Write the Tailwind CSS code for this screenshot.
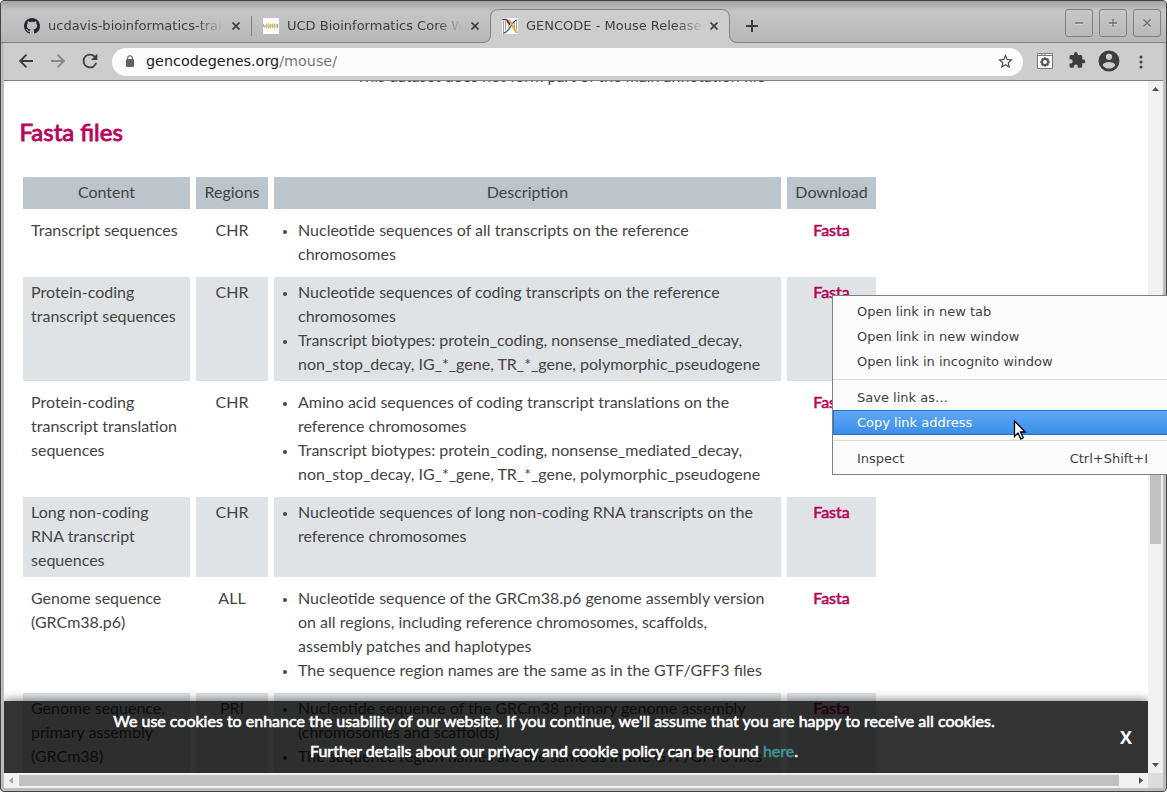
<!DOCTYPE html>
<html lang="en">
<head>
<meta charset="utf-8">
<title>GENCODE - Mouse Release</title>
<script src="https://cdn.jsdelivr.net/npm/@tailwindcss/browser@4"></script>
</head>
<body class="w-[1167px] h-[792px] overflow-hidden bg-white font-['DejaVu_Sans',sans-serif] text-[13px] text-[#3c3f41]">
<div class="relative flex flex-col w-[1167px] h-[792px] overflow-hidden rounded-[4px] border border-[#454345] bg-[#bebcbe]">
  <!-- tab strip -->
  <header class="flex h-[42px] shrink-0 items-end border-b border-[#808080] bg-linear-to-b from-[#a2a2a2] via-[#c6c6c6] via-25% to-[#b7b7b7] pl-[23px]">
    <div class="flex h-[33px] w-[227px] shrink-0 items-center">
      <svg class="size-4 shrink-0" viewBox="0 0 16 16" fill="#24292e"><path d="M8 0C3.58 0 0 3.58 0 8c0 3.54 2.29 6.53 5.47 7.59.4.07.55-.17.55-.38 0-.19-.01-.82-.01-1.49-2.01.37-2.53-.49-2.69-.94-.09-.23-.48-.94-.82-1.13-.28-.15-.68-.52-.01-.53.63-.01 1.08.58 1.23.82.72 1.21 1.87.87 2.33.66.07-.52.28-.87.51-1.07-1.78-.2-3.64-.89-3.64-3.95 0-.87.31-1.59.82-2.15-.08-.2-.36-1.02.08-2.12 0 0 .67-.21 2.2.82.64-.18 1.32-.27 2-.27s1.36.09 2 .27c1.53-1.04 2.2-.82 2.2-.82.44 1.1.16 1.92.08 2.12.51.56.82 1.27.82 2.15 0 3.07-1.87 3.75-3.65 3.95.29.25.54.73.54 1.48 0 1.07-.01 1.93-.01 2.2 0 .21.15.46.55.38A8.01 8.01 0 0 0 16 8c0-4.42-3.58-8-8-8z"/></svg>
      <span class="ml-2 w-[175px] overflow-hidden whitespace-nowrap mask-r-from-[148px] mask-r-to-[175px]">ucdavis-bioinformatics-training</span>
      <svg class="ml-[9px] size-2 shrink-0" viewBox="0 0 8 8" stroke="#3c3f41" stroke-width="1.7"><path d="M.5.5l7 7M7.5.5l-7 7"/></svg>
    </div>
    <div class="mb-[6px] h-5 w-px shrink-0 bg-[#808080]"></div>
    <div class="flex h-[33px] w-[238px] shrink-0 items-center pl-[11px]">
      <svg class="size-4 shrink-0" viewBox="0 0 16 16"><path fill="#fff" d="M0 0h16v16H0z"/><path stroke="#ecd3a0" stroke-width="3" d="M3 8h10.500"/><path stroke="#d9b263" stroke-width="5" stroke-dasharray="1 1" d="M3 8h10.500"/><path stroke="#7aa7c7" d="M.6 6v3M1.900 7v3M14.500 6v4"/></svg>
      <span class="ml-2 w-[177px] overflow-hidden whitespace-nowrap mask-r-from-[150px] mask-r-to-[175px]">UCD Bioinformatics Core Workshop</span>
      <svg class="ml-[7px] size-2 shrink-0" viewBox="0 0 8 8" stroke="#3c3f41" stroke-width="1.7"><path d="M.5.5l7 7M7.500.5l-7 7"/></svg>
    </div>
    <div class="relative -mb-px -ml-2 flex h-[34px] w-[256px] shrink-0 items-center pl-[20px]">
      <svg class="absolute inset-0 h-[34px] w-[256px]" viewBox="0 0 256 34"><path fill="#cdcdcd" d="M0 34V33.500C6 33.500 8.500 31 8.500 26V8.500Q8.500.5 16.500.5H239.500Q247.500.5 247.500 8.500V25.500Q247.500 33.500 255.500 33.500V34z"/><path fill="none" stroke="#808080" d="M0 33.500C6 33.500 8.500 31 8.500 25.500V8.500Q8.500.5 16.500.5H239.500Q247.500.5 247.500 8.500V25.500Q247.500 33.500 255.500 33.500"/></svg>
      <svg class="relative size-4 shrink-0" viewBox="0 0 16 16" fill="none"><path fill="#fff" d="M0 0h16v16H0z"/><path stroke="#888" stroke-width=".8" d="M1.500 3v11M3.500 3v9M4.500 2l3 8M12.500 4v6M14.500 3v9"/><path stroke="#7b3378" stroke-width="1.400" d="M0 1.500h4c2 0 3 3 4 5"/><path stroke="#347f48" stroke-width="1.400" d="M1 15.300c4-.3 6-4 8-7.300"/><path stroke="#333a60" stroke-width="1.200" d="M9 8c2-4 3-5.500 6-6M8 7l-3-4"/><path stroke="#eda52c" stroke-width="1.900" d="M7 2c3 2 4 10 8.500 13"/></svg>
      <span class="relative ml-2 w-[176px] overflow-hidden whitespace-nowrap mask-r-from-[150px] mask-r-to-[178px]">GENCODE - Mouse Release M25</span>
      <svg class="relative ml-2 size-2 shrink-0" viewBox="0 0 8 8" stroke="#3c3f41" stroke-width="1.700"><path d="M.5.5l7 7M7.500.5l-7 7"/></svg>
    </div>
    <svg class="mb-[10px] ml-2 size-3 shrink-0" viewBox="0 0 12 12" stroke="#3c3f41" stroke-width="2"><path d="M6 0v12M0 6h12"/></svg>
    <div class="mb-[5px] ml-auto mr-[5px] flex gap-[6px]">
      <div class="flex size-7 items-center justify-center rounded-[3px] border border-[#808080]"><svg class="size-[10px]" viewBox="0 0 10 10" fill="none" stroke-width="1.300"><path stroke="#ddd" d="M1 6h8"/><path stroke="#707070" d="M1 5h8"/></svg></div>
      <div class="flex size-7 items-center justify-center rounded-[3px] border border-[#808080]"><svg class="size-[10px]" viewBox="0 0 10 10" fill="none" stroke-width="1.300"><path stroke="#ddd" d="M1 6h8M5 2v8"/><path stroke="#707070" d="M1 5h8M5 1v8"/></svg></div>
      <div class="flex size-7 items-center justify-center rounded-[3px] border border-[#808080]"><svg class="size-[10px]" viewBox="0 0 10 10" fill="none" stroke-width="1.500"><path stroke="#ddd" d="M1.500 2.500l7 7M8.500 2.500l-7 7"/><path stroke="#707070" d="M1.500 1.500l7 7M8.500 1.500l-7 7"/></svg></div>
    </div>
  </header>
  <!-- toolbar -->
  <div class="mx-[3px] flex h-[38px] shrink-0 items-center border-b border-[#808080] bg-[#cdcdcd] pl-[15px]">
    <svg class="-mt-px size-[14px]" viewBox="0 0 14 14" fill="none" stroke="#3c3f41" stroke-width="1.900"><path d="M14 7H1.500M7.500.7L1.200 7l6.300 6.300"/></svg>
    <svg class="-mt-px ml-[18px] size-[14px]" viewBox="0 0 14 14" fill="none" stroke="#888" stroke-width="1.900"><path d="M0 7h12.500M6.500.7L12.800 7l-6.300 6.300"/></svg>
    <svg class="-mt-px ml-[14px] size-[22px]" viewBox="0 0 24 24" fill="#3c3f41"><path d="M17.650 6.350A7.960 7.960 0 0 0 12 4a8 8 0 1 0 7.730 10h-2.080A6 6 0 1 1 12 6c1.660 0 3.140.69 4.220 1.780L13 11h7V4z"/></svg>
    <div class="ml-[11px] flex h-7 w-[911px] items-center rounded-full bg-[#fcfcfc] pl-[14px] pr-[10px]">
      <svg class="-mt-px h-[12px] w-[8px]" viewBox="0 0 8 12"><rect y="4" width="8" height="8" rx="1" fill="#5f6163"/><path fill="none" stroke="#5f6163" stroke-width="1.100" d="M1.700 5V3a2.300 2.300 0 0 1 4.600 0v2"/></svg>
      <span class="ml-3 text-[14.370px] text-[#202124]">gencodegenes.org<span class="text-[#75777a]">/mouse/</span></span>
      <svg class="ml-auto size-[15px]" viewBox="2 2 20 20" fill="#4a4d50"><path d="M22 9.240l-7.190-.62L12 2 9.190 8.630 2 9.240l5.460 4.730L5.820 21 12 17.270 18.180 21l-1.630-7.030L22 9.240zM12 15.400l-3.760 2.270 1-4.280-3.320-2.880 4.380-.38L12 6.100l1.710 4.040 4.380.38-3.320 2.880 1 4.280L12 15.400z"/></svg>
    </div>
    <svg class="-mt-px ml-[14px] size-4" viewBox="0 0 16 16"><path fill="#fafafa" stroke="#7b7b7b" d="M.5.5h15v15H.5z"/><path stroke="#777" d="M1 2.500h14"/><path stroke="#777" d="M5 1v1M8 1v1"/><circle cx="8" cy="9" r="3" fill="none" stroke="#555" stroke-width="1.900"/><path stroke="#555" stroke-width="1.800" d="M8 4.300v2M8 11.700v2M3.300 9h2M10.700 9h2M4.700 5.700l1.300 1.300M10 11l1.300 1.300M11.300 5.700L10 7M6 11l-1.300 1.300"/></svg>
    <svg class="-mt-px ml-[15px] size-[18px]" viewBox="0 1 24 24" fill="#3c3f41"><path d="M20.500 11H19V7c0-1.100-.9-2-2-2h-4V3.500a2.500 2.500 0 0 0-5 0V5H4c-1.100 0-2 .9-2 2v3.800h1.500a2.700 2.700 0 0 1 0 5.400H2V20c0 1.100.9 2 2 2h3.800v-1.500a2.700 2.700 0 0 1 5.400 0V22H17c1.100 0 2-.9 2-2v-4h1.500a2.500 2.500 0 0 0 0-5z"/></svg>
    <svg class="-mt-px ml-[12px] size-[22px]" viewBox="1.500 1.500 21 21" fill="#3c3f41"><path d="M12 2a10 10 0 1 0 0 20 10 10 0 0 0 0-20zm0 3a3 3 0 1 1 0 6 3 3 0 0 1 0-6zm0 14.200a7.200 7.200 0 0 1-6-3.220c.03-1.990 4-3.080 6-3.080s5.970 1.090 6 3.080a7.200 7.200 0 0 1-6 3.220z"/></svg>
    <svg class="ml-[19px] h-[14px] w-[4px]" viewBox="0 0 4 14" fill="#3c3f41"><circle cx="2" cy="2" r="1.500"/><circle cx="2" cy="7" r="1.500"/><circle cx="2" cy="12" r="1.500"/></svg>
  </div>
  <!-- viewport -->
  <div class="mx-[3px] flex h-[692px] w-[1159px] shrink-0 bg-[#f1f1f1]">
    <main class="relative h-[692px] w-[1144px] shrink-0 overflow-hidden bg-white font-[Lato,sans-serif] text-[16px] leading-6 text-[#444]">
      <p class="-mt-[17px] h-6 pl-[352px]">This dataset does not form part of the main annotation file</p>
      <h2 class="mt-7 pl-[15.500px] text-[24px] leading-8 text-[#b9045b] [-webkit-text-stroke:0.900px_#b9045b]">Fasta files</h2>
      <table class="ml-[13px] mt-[23px] w-[865px] table-fixed border-separate border-spacing-[6px] [&_td]:px-2 [&_td]:pt-[3px] [&_td]:pb-[5px] [&_td]:align-top [&_th]:bg-[#bcc4cc] [&_th]:px-1 [&_th]:pt-[3px] [&_th]:pb-[5px] [&_th]:font-normal [&_tbody_tr:nth-child(even)_td]:bg-[#e0e3e5] [&_ul]:list-disc [&_ul]:pl-4 [&_li]:marker:text-[12px] [&_tr_td:nth-child(2)]:text-center [&_tr_td:nth-child(4)]:text-center [&_a]:text-[#b9045b] [&_a]:[-webkit-text-stroke:0.600px_#b9045b]">
        <colgroup><col class="w-[167px]"><col class="w-[72px]"><col class="w-[507px]"><col class="w-[89px]"></colgroup>
        <thead><tr><th>Content</th><th>Regions</th><th>Description</th><th>Download</th></tr></thead>
        <tbody>
          <tr><td>Transcript sequences</td><td>CHR</td><td><ul><li>Nucleotide sequences of all transcripts on the reference<br>chromosomes</li></ul></td><td><a>Fasta</a></td></tr>
          <tr><td>Protein-coding<br>transcript sequences</td><td>CHR</td><td><ul><li>Nucleotide sequences of coding transcripts on the reference<br>chromosomes</li><li>Transcript biotypes: protein_coding, nonsense_mediated_decay,<br>non_stop_decay, IG_*_gene, TR_*_gene, polymorphic_pseudogene</li></ul></td><td><a>Fasta</a></td></tr>
          <tr><td>Protein-coding<br>transcript translation<br>sequences</td><td>CHR</td><td><ul><li>Amino acid sequences of coding transcript translations on the<br>reference chromosomes</li><li>Transcript biotypes: protein_coding, nonsense_mediated_decay,<br>non_stop_decay, IG_*_gene, TR_*_gene, polymorphic_pseudogene</li></ul></td><td><a>Fasta</a></td></tr>
          <tr><td>Long non-coding<br>RNA transcript<br>sequences</td><td>CHR</td><td><ul><li>Nucleotide sequences of long non-coding RNA transcripts on the<br>reference chromosomes</li></ul></td><td><a>Fasta</a></td></tr>
          <tr><td>Genome sequence<br>(GRCm38.p6)</td><td>ALL</td><td><ul><li>Nucleotide sequence of the GRCm38.p6 genome assembly version<br>on all regions, including reference chromosomes, scaffolds,<br>assembly patches and haplotypes</li><li>The sequence region names are the same as in the GTF/GFF3 files</li></ul></td><td><a>Fasta</a></td></tr>
          <tr><td>Genome sequence,<br>primary assembly<br>(GRCm38)</td><td>PRI</td><td><ul><li>Nucleotide sequence of the GRCm38 primary genome assembly<br>(chromosomes and scaffolds)</li><li>The sequence region names are the same as in the GTF/GFF3 files</li></ul></td><td><a>Fasta</a></td></tr>
        </tbody>
      </table>
      <!-- cookie notice -->
      <div class="absolute inset-x-0 bottom-0 flex h-[72px] items-center bg-black/80 text-white shadow-[0_0_10px_rgba(0,0,0,0.6)]">
        <div class="w-[1100px] text-center leading-[30px] [-webkit-text-stroke:0.600px_currentColor]">
          <p class="-mt-0.5">We use cookies to enhance the usability of our website. If you continue, we'll assume that you are happy to receive all cookies.</p>
          <p>Further details about our privacy and cookie policy can be found <a class="text-[#449393]">here</a>.</p>
        </div>
        <button class="ml-[16px] font-['Open_Sans',sans-serif] text-[18px] leading-6 font-bold">X</button>
      </div>
    </main>
    <div class="flex w-[15px] flex-col items-center justify-between py-[6px]">
      <svg class="h-[4px] w-[7px]" viewBox="0 0 7 4" fill="#505050"><path d="M0 4L3.500 0 7 4z"/></svg>
      <div class="mt-[343px] h-[110px] w-[11px] bg-[#c1c1c1]"></div>
      <svg class="mt-auto h-[4px] w-[7px]" viewBox="0 0 7 4" fill="#505050"><path d="M0 0h7L3.500 4z"/></svg>
    </div>
  </div>
  <div class="mx-[3px] flex h-[15px] shrink-0 items-center bg-[#f1f1f1]">
    <svg class="ml-[5px] h-[7px] w-[4px]" viewBox="0 0 4 7" fill="#a3a3a3"><path d="M4 0v7L0 3.500z"/></svg>
    <div class="ml-[6px] h-[11px] w-[1100px] bg-[#c1c1c1]"></div>
    <svg class="ml-5 h-[7px] w-[4px]" viewBox="0 0 4 7" fill="#505050"><path d="M0 0v7l4-3.500z"/></svg>
    <div class="ml-auto size-[15px] bg-[#dcdcdc]"></div>
  </div>
</div>
<!-- link context menu -->
<div class="absolute left-[832px] top-[295px] flex h-[180px] w-[340px] flex-col border border-[#808080] bg-[#fcfcfc] py-[3px] leading-[25px] [&>p]:h-[25px] [&>p]:shrink-0 [&>p]:pl-6 [&>hr]:my-[5px] [&>hr]:border-[#dcdcdc]">
  <p>Open link in new tab</p><p>Open link in new window</p><p>Open link in incognito window</p>
  <hr>
  <p>Save link as…</p>
  <p class="border border-r-0 border-[#2a72bf] bg-linear-to-b from-[#5ea8f8] to-[#3a8ee8] leading-[23px] text-white !pl-[23px]">Copy link address</p>
  <hr>
  <p class="flex justify-between pr-[23px]"><span>Inspect</span><span>Ctrl+Shift+I</span></p>
</div>
<svg class="absolute left-[1013px] top-[419px] h-[22px] w-[14px]" viewBox="0 0 14 22"><path fill="#fff" stroke="#000" stroke-width="1.300" d="M1.500 2v15.500l3.500-3.500 2.800 6 2.400-1.200L7.500 13h4.700z"/></svg>
</body>
</html>
